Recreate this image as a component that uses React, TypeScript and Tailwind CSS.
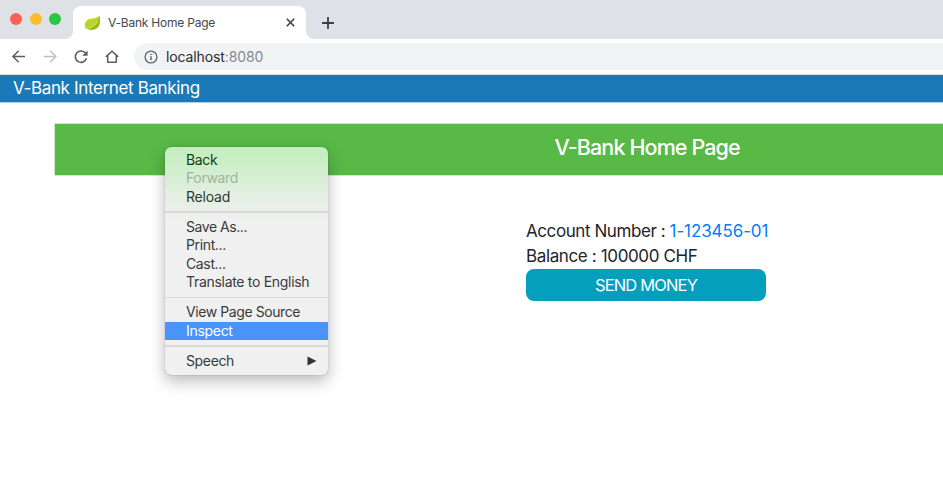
import type { ReactNode } from "react";

function MenuItem({ children, tone = "text-[#3a3a3a]", tracking = "tracking-[-0.36px]" }: { children: ReactNode; tone?: string; tracking?: string }) {
  return <div className={`flex h-[18.5px] items-center pl-[21px] pr-[11px] text-[14px] leading-[18px] ${tone} ${tracking}`}>{children}</div>;
}

function Separator() {
  return (
    <div className="flex h-[11.5px] items-center">
      <div className="h-[1.5px] w-full bg-[#d8dad8]" />
    </div>
  );
}

function ContextMenu() {
  return (
    <div className="absolute left-[165px] top-[147px] h-[228px] w-[163px] rounded-[6px] bg-[#f0f0f0] bg-[linear-gradient(#c3edbd_0px,#cdeec9_18px,#e2efe0_46px,#f0f0f0_76px)] pt-[3.5px] shadow-[0_0_1px_rgba(0,0,0,0.5),0_6px_16px_rgba(0,0,0,0.28)]">
      <MenuItem tone="text-[#173d13]">Back</MenuItem>
      <MenuItem tone="text-[#a0b59d]">Forward</MenuItem>
      <MenuItem tone="text-[#2e392d]" tracking="tracking-[-0.2px]">Reload</MenuItem>
      <Separator />
      <MenuItem tracking="tracking-[-0.45px]">Save As...</MenuItem>
      <MenuItem>Print...</MenuItem>
      <MenuItem>Cast...</MenuItem>
      <MenuItem tracking="tracking-[-0.3px]">Translate to English</MenuItem>
      <Separator />
      <MenuItem tracking="tracking-[-0.42px]">View Page Source</MenuItem>
      <div className="bg-[#4a93f8]">
        <MenuItem tone="text-white" tracking="tracking-[-0.3px]">Inspect</MenuItem>
      </div>
      <Separator />
      <MenuItem>
        <span className="flex-1">Speech</span>
        <svg width="10" height="10" viewBox="0 0 10 10" fill="#333"><path d="M.5 .5 9.5 5 .5 9.5Z" /></svg>
      </MenuItem>
    </div>
  );
}

function TabStrip() {
  return (
    <div className="flex h-[39px] bg-[#dee1e6]">
      <div className="flex w-[65px] gap-[7.5px] pl-[10px] pt-[13px]">
        <i className="size-[12px] shrink-0 rounded-full bg-[#fe5f57]" />
        <i className="size-[12px] shrink-0 rounded-full bg-[#febc2e]" />
        <i className="size-[12px] shrink-0 rounded-full bg-[#28c840]" />
      </div>
      <svg className="mt-[31px] shrink-0" width="8" height="8" viewBox="0 0 8 8" fill="#fff"><path d="M8 0V8H0A8 8 0 0 0 8 0Z" /></svg>
      <div className="mt-[6px] flex h-[33px] w-[233px] items-center rounded-t-[8px] bg-white pl-[11px] pr-[11px]">
        <svg width="17" height="16" viewBox="0 0 17 16">
          <path d="M15.2 .5C16.8 6.4 15.9 12 11.5 14 8.2 15.4 4.2 14.7 1.8 13.6 .5 11.2 .4 7.6 3 5.4 6.4 2.6 12.6 4.6 15.2 .5Z" fill="#b9d622" />
          <path d="M15.2 .5C16.8 6.4 15.9 12 11.5 14 8.2 15.4 4.2 14.7 1.8 13.6 6.8 13 12.5 10.8 14 5.2 14.8 3.6 15.2 2 15.2 .5Z" fill="#93bd1c" />
          <path d="M2.2 13.5C7.5 12.8 12 10.2 13.8 5.8" fill="none" stroke="#e2efa0" strokeWidth=".7" />
        </svg>
        <span className="ml-[7px] flex-1 whitespace-nowrap text-[12px] tracking-[-0.22px] text-[#45494d]">V-Bank Home Page</span>
        <svg width="9" height="9" viewBox="0 0 9 9" stroke="#3c4043" strokeWidth="1.6"><path d="M.8 .8 8.2 8.2M8.2 .8 .8 8.2" /></svg>
      </div>
      <svg className="mt-[31px] shrink-0" width="8" height="8" viewBox="0 0 8 8" fill="#fff"><path d="M0 0V8H8A8 8 0 0 1 0 0Z" /></svg>
      <svg className="ml-[7.5px] mt-[16.5px]" width="12" height="12" viewBox="0 0 12 12" stroke="#3c4043" strokeWidth="1.8"><path d="M6 0V12M0 6H12" /></svg>
    </div>
  );
}

function Toolbar() {
  return (
    <div className="flex h-[36px] border-b border-[#dcdee0] bg-white">
      <svg className="shrink-0" width="134" height="35" viewBox="0 39 134 35" fill="none" stroke="#5b5f64" strokeWidth="1.5">
        <path d="M25 56.5H13.2M18.7 50.7 12.9 56.5 18.7 62.3" />
        <path d="M43.7 56.5H55.5M50 50.7 55.8 56.5 50 62.3" stroke="#bdbfc2" />
        <path d="M85.5 53.1A5.7 5.7 0 1 0 86.5 58.3" strokeWidth="1.6" />
        <path d="M87.6 50.4V55.8H82.2Z" fill="#5b5f64" stroke="none" />
        <path d="M105.8 56.9 112 51.3 118.2 56.9M107.7 55.5V62.3H116.3V55.5" />
      </svg>
      <div className="mt-[4px] flex h-[27px] flex-1 items-center rounded-l-full bg-[#f1f3f4] pl-[10px]">
        <svg width="14" height="14" viewBox="0 0 14 14" fill="none" stroke="#5f6368" strokeWidth="1.3"><circle cx="7" cy="7" r="5.9" /><path d="M7 6.2V10.2M7 3.7V5.1" strokeWidth="1.4" /></svg>
        <span className="ml-[8px] text-[14px] tracking-[-0.12px] text-[#292c30]">localhost<span className="text-[#84898f]">:8080</span></span>
      </div>
    </div>
  );
}

export default function App() {
  return (
    <div className="relative h-[504px] w-[943px] overflow-hidden bg-white font-['Inter','Liberation_Sans',sans-serif]">
      <TabStrip />
      <Toolbar />
      <header className="h-[28px] border-b border-[#b0d0e7] bg-[#1c79b8] pl-[13px] text-[17px] leading-[26px] tracking-[-0.36px] text-white">V-Bank Internet Banking</header>
      <main>
        <div className="ml-[54px] mt-[20px] h-[53px] border-y border-l border-[#cdebc8] bg-[#58b947] pl-[499.5px] pt-[7px] text-[21.5px] font-medium leading-[32px] tracking-[-0.88px] text-white">V-Bank Home Page</div>
        <section className="ml-[526px] mt-[42px] w-[250px] text-[17px] leading-[25.5px] tracking-[-0.42px] text-[#212529]">
          <div className="whitespace-nowrap pt-[0.5px] leading-[25px]">Account Number : <a className="tracking-[-0.1px] text-[#087cfb]">1-123456-01</a></div>
          <div className="whitespace-nowrap tracking-[-0.37px]">Balance : 100000 CHF</div>
          <button className="flex h-[32px] w-[240px] items-center justify-center rounded-[8px] bg-[#039fbd] pt-[1px] text-[16.5px] tracking-[-0.85px] text-white">SEND MONEY</button>
        </section>
      </main>
      <ContextMenu />
    </div>
  );
}
